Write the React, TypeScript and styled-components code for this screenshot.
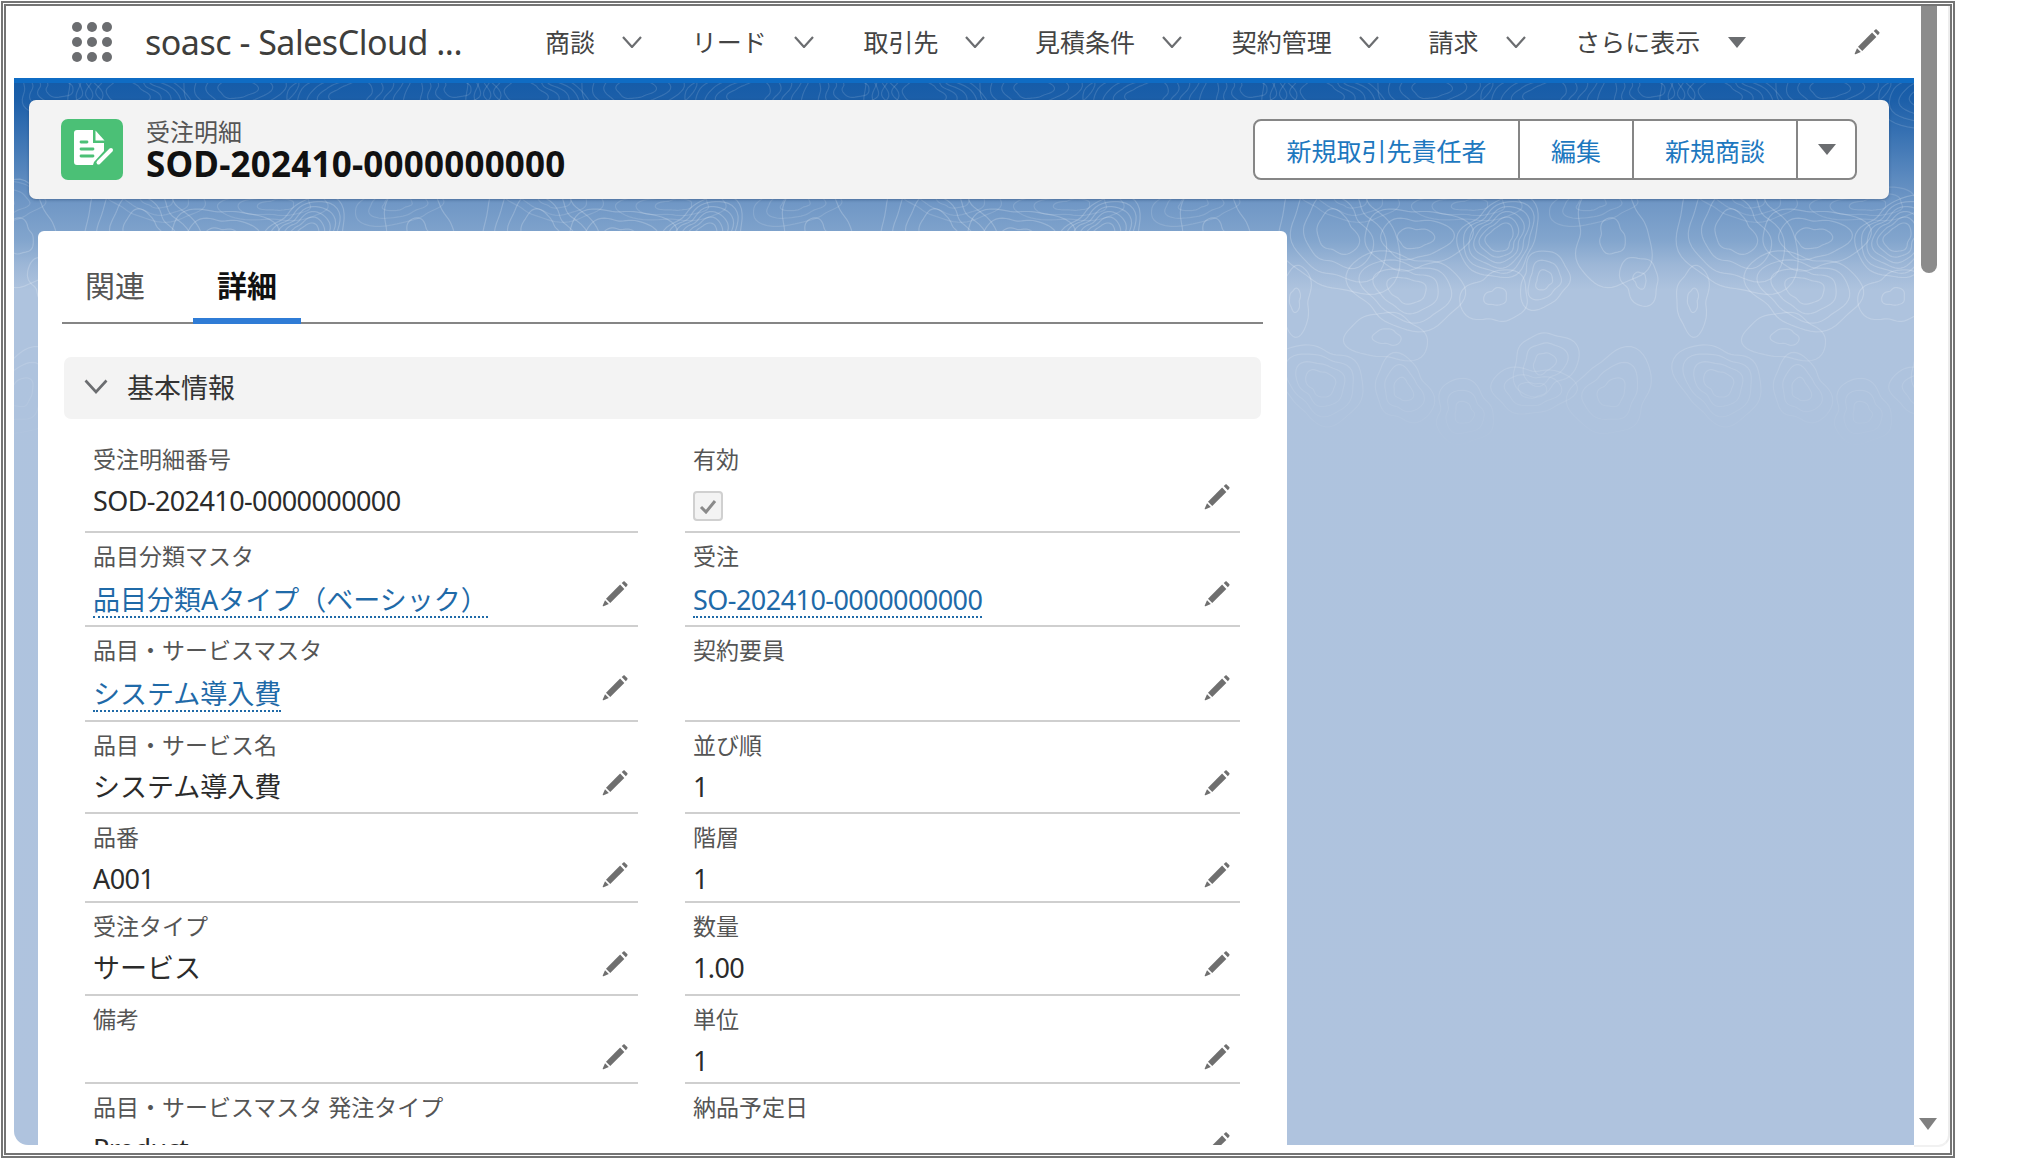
import React from "react";
import styled, { createGlobalStyle } from "styled-components";

const Global = createGlobalStyle`
  html, body { margin: 0; padding: 0; background: #fff; }
  body { width: 2027px; height: 1165px; overflow: hidden; font-family: "Noto Sans", "Noto Sans CJK JP", sans-serif; }
  * { box-sizing: border-box; }
`;

const Window = styled.div`
  margin: 1px 0 0 1px;
  width: 1954px;
  height: 1157px;
  border: 5px double #747474;
  display: flex;
  background: #fff;
  overflow: hidden;
`;
const Viewport = styled.div`
  width: 1908px;
  padding: 0 0 8px 8px;
  display: flex;
  flex-direction: column;
`;
const ScrollTrack = styled.div`
  width: 36px;
  padding: 0 7px 15px 7px;
  display: flex;
  flex-direction: column;
  align-items: flex-start;
  justify-content: space-between;
  border-right: 2px solid #ededed;
  border-bottom: 2px solid #f1f1f1;
  border-bottom-right-radius: 12px;
  margin-bottom: 6px;
`;
const ScrollThumb = styled.div`
  width: 16px;
  height: 267px;
  background: #8c8c8c;
  border-radius: 0 0 8px 8px;
`;
const ScrollArrow = styled.svg`
  width: 20px;
  height: 12px;
  fill: #808080;
  margin-left: -3px;
`;

const Nav = styled.nav`
  height: 72px;
  flex: none;
  display: flex;
  align-items: center;
  padding: 0 34px 0 58px;
  color: #444;
`;
const Launcher = styled.svg`
  width: 40px;
  height: 40px;
  flex: none;
  fill: #6b6d70;
`;
const AppName = styled.span`
  margin-left: 33px;
  width: 400px;
  flex: none;
  font-size: 34px;
  letter-spacing: -0.5px;
  color: #3e3e3c;
  white-space: nowrap;
`;
const NavItem = styled.div`
  display: flex;
  align-items: center;
  gap: 27px;
  margin-right: 49.7px;
  font-size: 25px;
  line-height: 34px;
  color: #444;
  white-space: nowrap;
`;
const Chevron = styled.svg`
  width: 20px;
  height: 12px;
  flex: none;
  fill: none;
  stroke: #6b6d70;
  stroke-width: 2.2;
`;
const Caret = styled.svg`
  width: 20px;
  height: 11px;
  flex: none;
  fill: #6b6d70;
`;
const NavPencil = styled.div`
  margin-left: auto;
  display: flex;
`;
const PencilSvg = styled.svg`
  width: 26px;
  height: 26px;
  flex: none;
  fill: #6f6f6f;
`;

const Stage = styled.main`
  position: relative;
  flex: 1;
  min-height: 0;
  overflow: hidden;
  border-top: 5px solid #0f6cc4;
  border-bottom-left-radius: 14px;
  padding: 17px 25px 0 15px;
  background: linear-gradient(
    180deg,
    #165ca8 0,
    #1c5fa9 17px,
    #6e96c5 117px,
    #82a5cd 157px,
    #9db7d7 182px,
    #aec3de 207px,
    #afc3de 100%
  );
`;
const Topo = styled.svg`
  position: absolute;
  left: 0;
  top: 0;
  width: 1901px;
  height: 372px;
  fill: none;
  stroke: rgba(255, 255, 255, 0.2);
  stroke-width: 1.2;
  mask-image: linear-gradient(180deg, #000 0, #000 62%, transparent 100%);
`;
const RecordHeader = styled.header`
  position: relative;
  height: 99px;
  background: #f3f3f3;
  border-radius: 7px;
  box-shadow: 0 1px 3px rgba(30, 60, 100, 0.45);
  display: flex;
  align-items: center;
  padding: 0 32px;
`;
const ObjectIcon = styled.svg`
  width: 62px;
  height: 61px;
  flex: none;
  border-radius: 7px;
  background: #4bc076;
`;
const TitleBlock = styled.div`
  margin-left: 23px;
  display: flex;
  flex-direction: column;
`;
const ObjectLabel = styled.span`
  font-size: 24px;
  line-height: 27px;
  color: #555;
`;
const RecordTitle = styled.span`
  font-size: 35px;
  line-height: 37px;
  font-weight: 700;
  letter-spacing: 0.2px;
  color: #111;
`;
const ButtonGroup = styled.div`
  margin-left: auto;
  height: 61px;
  display: flex;
  background: #fff;
  border: 2px solid #868686;
  border-radius: 8px;
`;
const GroupButton = styled.button<{ $w: number }>`
  width: ${(p) => p.$w}px;
  height: 100%;
  padding: 0;
  background: none;
  border: none;
  border-left: 2px solid #868686;
  font: inherit;
  font-size: 25px;
  color: #1d78bf;
  display: flex;
  align-items: center;
  justify-content: center;
  &:first-child { border-left: none; }
`;

const Card = styled.section`
  position: relative;
  margin: 32px 0 0 9px;
  width: 1249px;
  height: 1000px;
  background: #fff;
  border-radius: 6px 6px 0 0;
  padding: 19px 24px 0;
`;
const Tabs = styled.div`
  display: flex;
  gap: 24px;
  border-bottom: 2px solid #858585;
`;
const Tab = styled.div<{ $active?: boolean }>`
  padding: 0 24px;
  height: 74px;
  margin-bottom: -2px;
  display: flex;
  align-items: center;
  font-size: 30px;
  font-weight: ${(p) => (p.$active ? 700 : 400)};
  color: ${(p) => (p.$active ? "#111" : "#555")};
  border-bottom: 6px solid ${(p) => (p.$active ? "#2f7cd6" : "transparent")};
  &:first-child { margin-left: -1px; }
`;
const SectionBar = styled.div`
  margin: 33px 2px 0 2px;
  height: 62px;
  background: #f3f3f3;
  border-radius: 7px;
  display: flex;
  align-items: center;
  padding: 0 0 3px 20px;
  gap: 19px;
  font-size: 27px;
  color: #333;
`;
const SectionChevron = styled.svg`
  width: 24px;
  height: 15px;
  flex: none;
  fill: none;
  stroke: #6b6d70;
  stroke-width: 2.6;
`;
const FieldGrid = styled.div`
  margin: 17px 0 0 23px;
  display: grid;
  grid-template-columns: 553px 555px;
  column-gap: 47px;
`;
const Field = styled.div<{ $h: number; $open?: boolean }>`
  height: ${(p) => p.$h}px;
  padding: 8px 10px 0 8px;
  border-bottom: ${(p) => (p.$open ? "none" : "2px solid #cfcfcf")};
`;
const FieldLabel = styled.div`
  font-size: 23px;
  line-height: 30px;
  color: #555;
  white-space: nowrap;
`;
const ValueRow = styled.div`
  margin-top: 8px;
  height: 38px;
  display: flex;
  align-items: center;
  justify-content: space-between;
`;
const Value = styled.span<{ $tight?: boolean }>`
  font-size: 27px;
  line-height: 38px;
  color: #2b2b2b;
  white-space: nowrap;
  letter-spacing: ${(p) => (p.$tight ? "-0.6px" : "0")};
`;
const LinkValue = styled.a<{ $tight?: number }>`
  font-size: 27px;
  line-height: 32px;
  margin-top: 5px;
  color: #1f6aa8;
  white-space: nowrap;
  border-bottom: 2px dotted #1f6aa8;
  letter-spacing: ${(p) => p.$tight ?? 0}px;
`;
const EditSlot = styled.div`
  margin-left: auto;
  margin-bottom: 8px;
  display: flex;
`;
const Check = styled.div`
  width: 30px;
  height: 30px;
  margin-top: 10px;
  background: #f3f3f3;
  border: 2px solid #d0d0d0;
  border-radius: 4px;
  display: flex;
  align-items: center;
  justify-content: center;
`;
const CheckMark = styled.svg`
  width: 18px;
  height: 15px;
  fill: none;
  stroke: #8a8a8a;
  stroke-width: 3;
`;

const Pencil = () => (
  <PencilSvg viewBox="0 0 24 24">
    <path d="M18.2 1.8 19.6.6c.5-.4 1.100-.4 1.500 0l2.200 2.200c.4.4.4 1-.1 1.500L22 5.700z" />
    <path d="M16.700 3.300 20.600 7.300 7.600 20.200 3.700 16.300z" />
    <path d="M2.800 17.700 6.300 21.200 1.400 23.300c-.5.200-.9-.2-.7-.7z" />
  </PencilSvg>
);

const Down = () => (
  <Chevron viewBox="0 0 20 12">
    <path d="M1 1l9 10 9-10" />
  </Chevron>
);

type Blob = [number, number, number, number, number];

// one 398px-wide tile of the contour background: [x, y, rx, ry, rings]
const TILE_PERIOD = 398;
const tileBlobs: Blob[] = [
  [46, 150, 58, 62, 4],
  [124, 155, 46, 34, 3],
  [209, 155, 40, 38, 6],
  [321, 154, 42, 46, 2],
  [116, 207, 52, 40, 4],
  [205, 214, 30, 28, 2],
  [253, 197, 26, 26, 3],
  [349, 197, 20, 22, 2],
  [96, 254, 36, 26, 2],
  [253, 280, 30, 32, 3],
  [402, 217, 18, 30, 2],
  [112, 307, 28, 32, 3],
  [241, 307, 36, 26, 3],
  [321, 310, 40, 40, 3],
  [173, 330, 32, 28, 3],
  [30, 300, 40, 40, 4],
];
// the tighter bands that show above and below the record header
const bandBlobs: Blob[] = [
  [30, 10, 60, 34, 5],
  [140, 6, 50, 30, 4],
  [255, 12, 62, 36, 5],
  [360, 4, 44, 28, 4],
  [60, 118, 44, 20, 3],
  [180, 122, 48, 18, 3],
  [300, 120, 46, 20, 3],
];

const toRings = (blobs: Blob[]): string[] => {
  const out: string[] = [];
  blobs.forEach(([cx, cy, rx, ry, count], s) => {
    for (let k = 0; k < count; k++) {
      const f = 0.34 + (0.66 * k) / (count - 1);
      let d = "";
      for (let a = 0; a <= 64; a++) {
        const t = (a / 64) * Math.PI * 2;
        const w =
          1 +
          0.16 * Math.sin(t * 2 + s * 1.7) +
          0.1 * Math.sin(t * 3 + s * 2.3) +
          0.035 * Math.sin(t * 6 + s + k);
        d += `${a ? "L" : "M"}${(cx + Math.cos(t) * rx * f * w).toFixed(1)} ${(cy + Math.sin(t) * ry * f * w).toFixed(1)}`;
      }
      out.push(d + "Z");
    }
  });
  return out;
};
const rings = toRings(tileBlobs);
const bandRings = toRings(bandBlobs);

const TILE_ORIGIN = 1277 - TILE_PERIOD * 4;
const tileOffsets = [0, 1, 2, 3, 4, 5].map((k) => TILE_ORIGIN + k * TILE_PERIOD);

type F = {
  label: string;
  value?: string;
  tight?: boolean;
  link?: boolean;
  linkTight?: number;
  check?: boolean;
  edit?: boolean;
};

const rowHeights = [97, 94, 95, 92, 89, 93, 88, 80];

const fields: [F, F][] = [
  [
    { label: "受注明細番号", value: "SOD-202410-0000000000", tight: true },
    { label: "有効", check: true, edit: true },
  ],
  [
    { label: "品目分類マスタ", value: "品目分類Aタイプ（ベーシック）", link: true, edit: true },
    { label: "受注", value: "SO-202410-0000000000", link: true, linkTight: -0.55, edit: true },
  ],
  [
    { label: "品目・サービスマスタ", value: "システム導入費", link: true, edit: true },
    { label: "契約要員", edit: true },
  ],
  [
    { label: "品目・サービス名", value: "システム導入費", edit: true },
    { label: "並び順", value: "1", edit: true },
  ],
  [
    { label: "品番", value: "A001", tight: true, edit: true },
    { label: "階層", value: "1", edit: true },
  ],
  [
    { label: "受注タイプ", value: "サービス", edit: true },
    { label: "数量", value: "1.00", tight: true, edit: true },
  ],
  [
    { label: "備考", edit: true },
    { label: "単位", value: "1", edit: true },
  ],
  [
    { label: "品目・サービスマスタ 発注タイプ", value: "Product", tight: true },
    { label: "納品予定日", edit: true },
  ],
];

const navItems = ["商談", "リード", "取引先", "見積条件", "契約管理", "請求"];

const FieldCell = ({ f, h, open }: { f: F; h: number; open: boolean }) => (
  <Field $h={h} $open={open}>
    <FieldLabel>{f.label}</FieldLabel>
    <ValueRow>
      {f.check && (
        <Check>
          <CheckMark viewBox="0 0 18 15">
            <path d="M2 8l5 5L16 2" />
          </CheckMark>
        </Check>
      )}
      {f.value &&
        (f.link ? (
          <LinkValue $tight={f.linkTight}>{f.value}</LinkValue>
        ) : (
          <Value $tight={f.tight}>{f.value}</Value>
        ))}
      {f.edit && (
        <EditSlot>
          <Pencil />
        </EditSlot>
      )}
    </ValueRow>
  </Field>
);

export default function App() {
  return (
    <>
      <Global />
      <Window>
        <Viewport>
          <Nav>
            <Launcher viewBox="0 0 40 40">
              {[5, 20, 35].map((y) =>
                [5, 20, 35].map((x) => <circle key={`${x}-${y}`} cx={x} cy={y} r={5} />)
              )}
            </Launcher>
            <AppName>soasc - SalesCloud ...</AppName>
            {navItems.map((n) => (
              <NavItem key={n}>
                {n}
                <Down />
              </NavItem>
            ))}
            <NavItem>
              さらに表示
              <Caret viewBox="0 0 20 11">
                <path d="M1 0h18L10 11z" />
              </Caret>
            </NavItem>
            <NavPencil>
              <Pencil />
            </NavPencil>
          </Nav>
          <Stage>
            <Topo viewBox="0 0 1901 372">
              {tileOffsets.map((x) => (
                <g key={x} transform={`translate(${x} 0)`}>
                  {rings.map((d, i) => (
                    <path key={i} d={d} />
                  ))}
                  <g opacity={0.65}>
                    {bandRings.map((d, i) => (
                      <path key={i} d={d} />
                    ))}
                  </g>
                </g>
              ))}
            </Topo>
            <RecordHeader>
              <ObjectIcon viewBox="0 0 62 61">
                <path d="M16 11h16v13h11v8L33 43l-1 3H16a3 3 0 0 1-3-3V14a3 3 0 0 1 3-3z" fill="#fff" />
                <path d="M34.500 11.500 43.500 21.500H34.500z" fill="#fff" />
                <path d="M20 23h6M20 30h12M20 37h12" stroke="#4bc076" strokeWidth="2.800" strokeLinecap="round" />
                <path d="M37.500 43.500 50 31" stroke="#fff" strokeWidth="4" strokeLinecap="round" />
              </ObjectIcon>
              <TitleBlock>
                <ObjectLabel>受注明細</ObjectLabel>
                <RecordTitle>SOD-202410-0000000000</RecordTitle>
              </TitleBlock>
              <ButtonGroup>
                <GroupButton $w={263}>新規取引先責任者</GroupButton>
                <GroupButton $w={114}>編集</GroupButton>
                <GroupButton $w={164}>新規商談</GroupButton>
                <GroupButton $w={59}>
                  <Caret viewBox="0 0 20 11">
                    <path d="M1 0h18L10 11z" />
                  </Caret>
                </GroupButton>
              </ButtonGroup>
            </RecordHeader>
            <Card>
              <Tabs>
                <Tab>関連</Tab>
                <Tab $active>詳細</Tab>
              </Tabs>
              <SectionBar>
                <SectionChevron viewBox="0 0 24 15">
                  <path d="M1.500 1.500 12 13 22.500 1.500" />
                </SectionChevron>
                基本情報
              </SectionBar>
              <FieldGrid>
                {fields.map((row, i) => (
                  <React.Fragment key={i}>
                    <FieldCell f={row[0]} h={rowHeights[i]} open={i === 7} />
                    <FieldCell f={row[1]} h={rowHeights[i]} open={i === 7} />
                  </React.Fragment>
                ))}
              </FieldGrid>
            </Card>
          </Stage>
        </Viewport>
        <ScrollTrack>
          <ScrollThumb />
          <ScrollArrow viewBox="0 0 20 12">
            <path d="M1 0h18L10 12z" />
          </ScrollArrow>
        </ScrollTrack>
      </Window>
    </>
  );
}
